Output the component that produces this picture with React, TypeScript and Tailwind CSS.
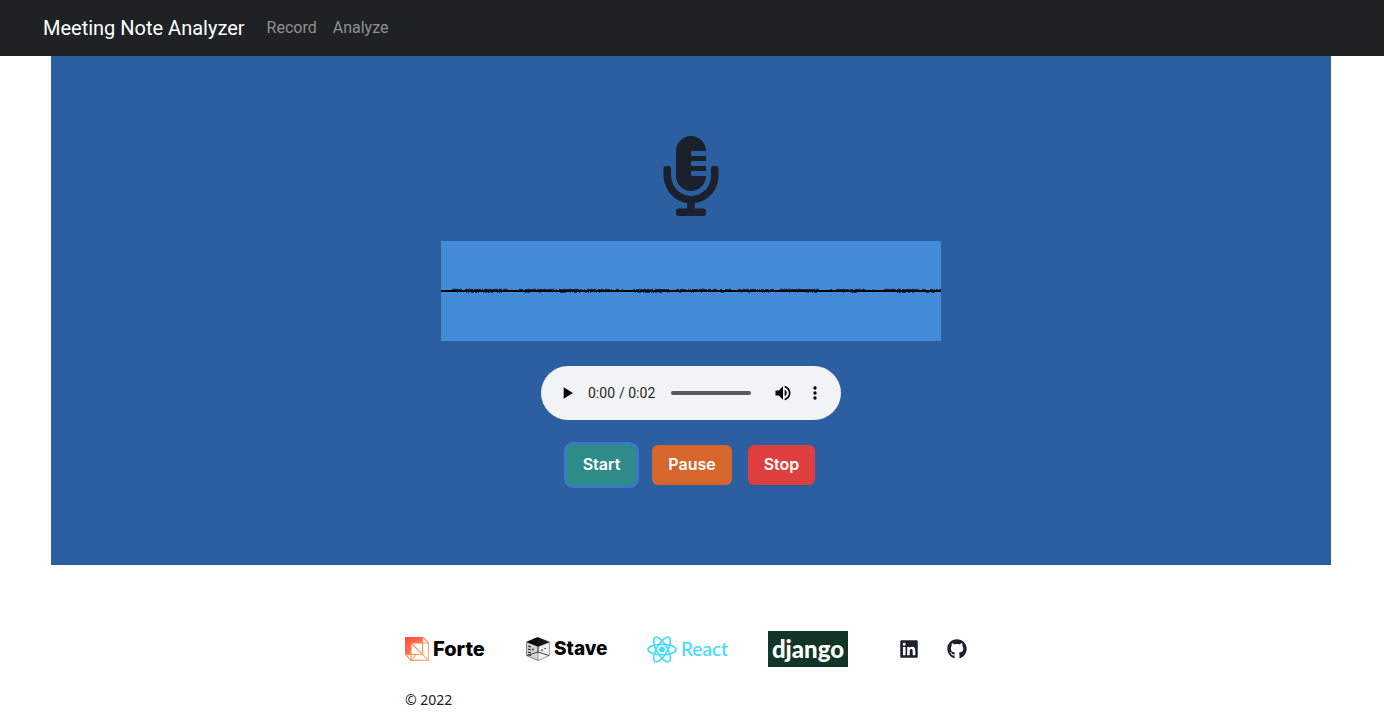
import { useEffect, useState } from "react";
import { FaGithub, FaLinkedin, FaMicrophoneAlt } from "react-icons/fa";

/* Builds a silent mono 8-bit WAV clip and returns an object URL for it. */
function createClip(seconds: number): string {
  const rate = 8000;
  const size = rate * seconds;
  const view = new DataView(new ArrayBuffer(44 + size));
  const tag = (offset: number, value: string) => {
    for (let i = 0; i < value.length; i++) view.setUint8(offset + i, value.charCodeAt(i));
  };
  tag(0, "RIFF");
  view.setUint32(4, 36 + size, true);
  tag(8, "WAVEfmt ");
  view.setUint32(16, 16, true);
  view.setUint16(20, 1, true);
  view.setUint16(22, 1, true);
  view.setUint32(24, rate, true);
  view.setUint32(28, rate, true);
  view.setUint16(32, 1, true);
  view.setUint16(34, 8, true);
  tag(36, "data");
  view.setUint32(40, size, true);
  for (let i = 0; i < size; i++) view.setUint8(44 + i, 128);
  return URL.createObjectURL(new Blob([view.buffer], { type: "audio/wav" }));
}

/* Stretches of low-level signal, as [start, end] in canvas units. */
const UPPER = [
  [11, 21], [24, 67], [70, 71], [77, 82], [84, 116], [118, 141], [143, 171], [175, 178], [181, 182],
  [192, 212], [213, 228], [235, 245], [247, 270], [272, 277], [279, 281], [284, 290],
  [297, 333], [339, 378], [389, 391], [395, 424], [432, 433], [443, 478], [481, 485], [488, 500],
];
const LOWER = [
  [16, 18], [24, 39], [42, 53], [55, 61], [83, 90], [97, 99], [103, 105], [118, 125],
  [128, 131], [133, 140], [144, 150], [154, 159], [163, 165], [170, 171], [194, 216],
  [218, 222], [226, 229], [237, 241], [250, 255], [260, 261], [279, 283], [299, 301],
  [306, 309], [321, 328], [347, 350], [355, 357], [365, 376], [402, 403], [409, 418],
  [456, 469], [471, 474], [485, 488], [490, 494],
];

function fill(ranges: number[][], y: number, skip: number) {
  let seed = 17 + y;
  let d = "";
  for (const [from, to] of ranges) {
    for (let x = from; x < to; x++) {
      seed = (seed * 1103515245 + 12345) % 2147483648;
      if (seed / 2147483648 > skip) d += `M${x} ${y}h1v1h-1z`;
    }
  }
  return d;
}

function Waveform() {
  return (
    <svg viewBox="0 0 500 100" shapeRendering="crispEdges" className="h-[100px] w-full max-w-[500px] bg-[#438bd9]" role="img" aria-label="Input level">
      <path d={fill(UPPER, 48, 0.15)} fill="#06131f" opacity="0.75" />
      <path d={fill(UPPER, 47, 0.75)} fill="#06131f" opacity="0.25" />
      <path d={fill(LOWER, 51, 0.35)} fill="#06131f" opacity="0.7" />
      <path d="M0 49h500v2H0z" fill="#000" />
    </svg>
  );
}

function ForteLogo() {
  return (
    <a href="#forte" className="flex h-9 w-20 items-center gap-1 text-black">
      <svg viewBox="0 0 24 24" className="size-6 shrink-0" fill="none" aria-hidden="true">
        <defs>
          <linearGradient id="forte-fill" x1="0" y1="0" x2="1" y2="1">
            <stop offset="0" stopColor="#fb4d3d" />
            <stop offset="1" stopColor="#ff8a5c" />
          </linearGradient>
          <linearGradient id="forte-line" x1="0" y1="0" x2="1" y2="1">
            <stop offset="0" stopColor="#ff6a45" />
            <stop offset="1" stopColor="#ffb56b" />
          </linearGradient>
        </defs>
        <path d="M0 0h18v6H6v11.500H0z" fill="url(#forte-fill)" />
        <path d="M6 6h17.400v17.400H6zM18 .5l5.400 5.500M.5 17.500L6 23.400M.5 17.500H17.500V.5M17.500 17.500l5.900 5.900M6 6l17.400 17.400M6 23.400l5-5.900" stroke="url(#forte-line)" strokeWidth="1.100" />
      </svg>
      <span className="text-[20px] leading-6 font-extrabold">Forte</span>
    </a>
  );
}

function StaveLogo() {
  return (
    <a href="#stave" className="flex h-9 w-20 items-center gap-1 text-black">
      <svg viewBox="0 0 24 24" className="size-6 shrink-0" fill="none" aria-hidden="true">
        <defs>
          <linearGradient id="stave-top" x1="0" y1="0" x2="1" y2="0">
            <stop offset="0" stopColor="#000" />
            <stop offset="1" stopColor="#222" />
          </linearGradient>
        </defs>
        <path d="M.5 5L12 9.500V23.500L.5 18.500z" fill="#d4d4d4" />
        <path d="M23.500 5L12 9.500V23.500l11.500-5z" fill="#f0f0f0" stroke="#888" strokeWidth=".8" />
        <path d="M0 5L11.500 0 24 5 12 9.800z" fill="url(#stave-top)" />
        <path d="M.5 5v13.500L12 23.500" stroke="#666" strokeWidth=".8" />
        <path d="M2 9l3 1M2 12l3 1M2 15l3 1M2 17.500l3 1" stroke="#222" strokeWidth="1.300" />
        <path d="M12 9.500v6M1 18.500l11-3.500 11 3.500" stroke="#333" strokeWidth=".9" />
        <path d="M7 11.500v2M16 12.500v1.500M19 11v1" stroke="#111" strokeWidth="1.200" />
      </svg>
      <span className="text-[19px] leading-6 font-extrabold">Stave</span>
    </a>
  );
}

function ReactLogo() {
  return (
    <a href="#react" className="flex h-9 w-20 items-center gap-1 text-[#3ddcfb]">
      <svg viewBox="-15 -13.500 30 27" className="h-[27px] w-[30px] shrink-0" fill="none" stroke="currentColor" strokeWidth="1.600" aria-hidden="true">
        <circle r="2.900" fill="currentColor" stroke="none" />
        <ellipse rx="14" ry="5.300" />
        <ellipse rx="14" ry="5.300" transform="rotate(60)" />
        <ellipse rx="14" ry="5.300" transform="rotate(120)" />
      </svg>
      <span className="font-[Lato,sans-serif] text-[19px] leading-6 font-medium">React</span>
    </a>
  );
}

function DjangoLogo() {
  return (
    <a href="#django" className="flex h-9 w-20 items-center justify-center bg-[#113527] text-white">
      <span className="font-[Lato,sans-serif] text-[24px] leading-8 font-black">django</span>
    </a>
  );
}

const BUTTON = "h-10 rounded-md px-4 pb-0.5 text-[16px] leading-6 font-semibold text-white";

export default function App() {
  const [clip, setClip] = useState<string>();

  useEffect(() => {
    const url = createClip(2);
    setClip(url);
    return () => URL.revokeObjectURL(url);
  }, []);

  return (
    <div className="bg-white font-[Inter,sans-serif] text-[#1a202c]">
      <header className="bg-[#1e2225] pr-0.5">
        <nav className="mx-auto flex h-14 max-w-[1320px] items-center px-3 font-[Roboto,sans-serif]">
          <a href="#home" className="mr-3.5 text-[20px] leading-7 text-white">Meeting Note Analyzer</a>
          <a href="#record" className="px-2 text-[16px] leading-6 text-[#8e9092]">Record</a>
          <a href="#analyze" className="px-2 text-[16px] leading-6 text-[#8e9092]">Analyze</a>
        </nav>
      </header>

      <main className="pr-0.5">
        <section className="mx-auto flex max-w-7xl flex-col items-center gap-[25px] bg-[#2c5fa1] py-20">
          <FaMicrophoneAlt className="size-20" aria-hidden="true" />
          <Waveform />
          <audio controls src={clip} aria-label="Recording" className="h-[54px] w-[300px]" />
          <div className="flex gap-4">
            <button type="button" className={`${BUTTON} bg-[#2f8b87] ring-3 ring-[#3a79c4]`}>Start</button>
            <button type="button" className={`${BUTTON} bg-[#d6662b]`}>Pause</button>
            <button type="button" className={`${BUTTON} bg-[#df3e3e]`}>Stop</button>
          </div>
        </section>
      </main>

      <footer className="flex justify-center pt-[66px] pr-0.5 pb-2">
        <div className="flex flex-col gap-[23px]">
          <div className="flex flex-wrap items-center gap-[41px]">
            <ForteLogo />
            <StaveLogo />
            <ReactLogo />
            <DjangoLogo />
            <div className="flex gap-2">
              <a href="#linkedin" aria-label="LinkedIn" className="flex h-9 w-10 items-center justify-center">
                <FaLinkedin className="size-5" />
              </a>
              <a href="#github" aria-label="GitHub" className="flex h-9 w-10 items-center justify-center">
                <FaGithub className="size-5" />
              </a>
            </div>
          </div>
          <p className="font-['Noto_Sans',sans-serif] text-[14px] leading-5">© 2022</p>
        </div>
      </footer>
    </div>
  );
}
